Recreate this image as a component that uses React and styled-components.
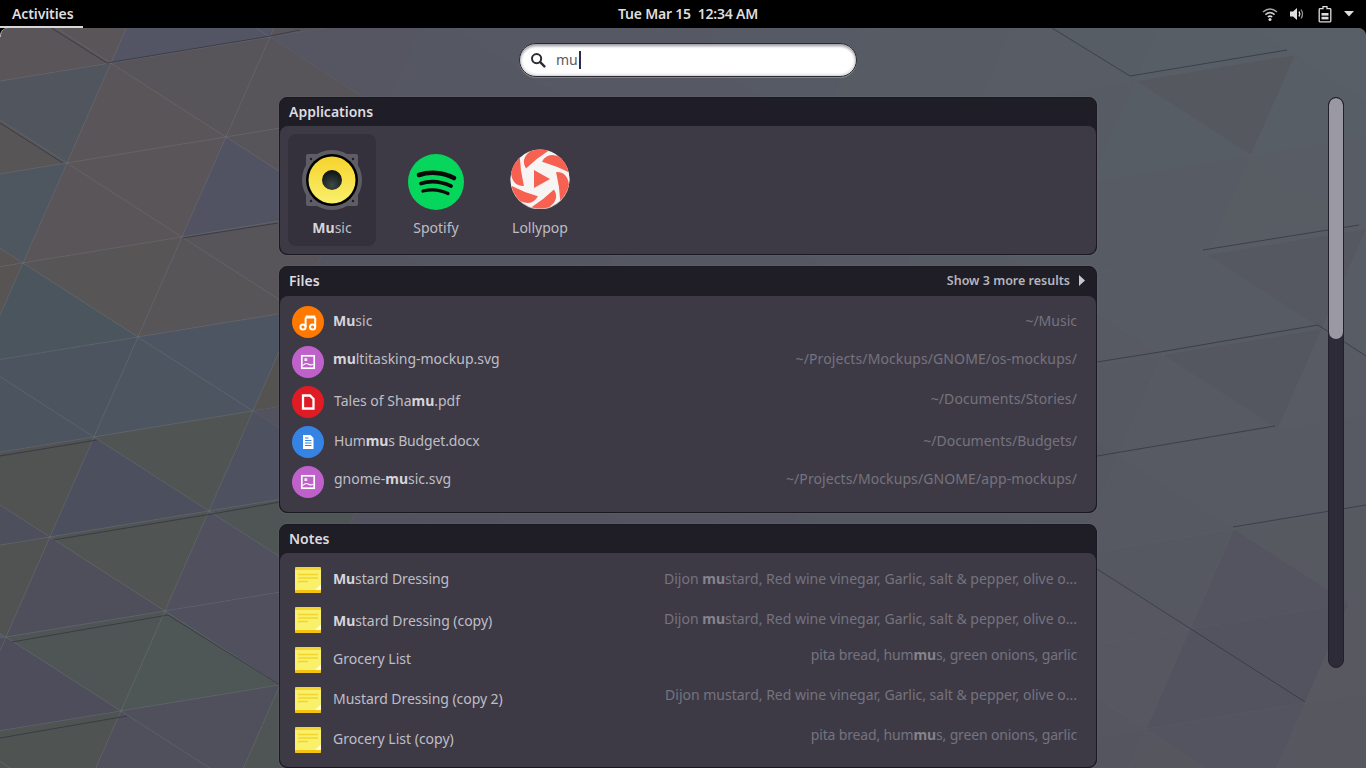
import React from 'react';
import styled, { createGlobalStyle } from 'styled-components';

const GlobalStyle = createGlobalStyle`
  html, body {
    margin: 0;
    height: 100%;
    background: #000;
    overflow: hidden;
  }
  body {
    font-family: "Noto Sans", "Open Sans", sans-serif;
  }
`;

const Screen = styled.div`
  width: 1366px;
  height: 768px;
  display: flex;
  flex-direction: column;
  overflow: hidden;
`;

const TopBar = styled.header`
  height: 28px;
  flex: none;
  display: grid;
  grid-template-columns: 1fr 280px 1fr;
  background: #000;
  color: #dededf;
  font-size: 14px;
  font-weight: 600;
`;

const Activities = styled.div`
  width: 83px;
  height: 28px;
  box-sizing: border-box;
  border-bottom: 2px solid #d6d6d6;
  padding: 0 0 0 12px;
  line-height: 27px;
  letter-spacing: -0.1px;
`;

const Clock = styled.div`
  text-align: center;
  line-height: 28px;
  margin-left: 10px;
  white-space: pre;
  letter-spacing: -0.2px;
`;

const Tray = styled.div`
  display: flex;
  align-items: center;
  justify-content: flex-end;
  padding-right: 12px;
  color: #dededf;
`;

const TrayIcon = styled.svg`
  display: block;
  margin-left: ${(p) => p.$gap}px;
`;

const Overview = styled.main`
  flex: 1;
  display: grid;
  position: relative;
  border-radius: 8px 8px 0 0;
  overflow: hidden;
  &::before {
    content: '';
    position: absolute;
    top: -1px;
    left: 0;
    width: 10px;
    height: 10px;
    box-sizing: border-box;
    border-top: 1px solid #d6d6d6;
    border-left: 1px solid #b5b5b5;
    border-top-left-radius: 8px;
    z-index: 2;
  }
`;

const WallpaperSvg = styled.svg`
  grid-area: 1 / 1;
  display: block;
`;

const Content = styled.div`
  grid-area: 1 / 1;
  display: grid;
  grid-template-columns: 1328px 16px;
  height: 740px;
  overflow: hidden;
`;

const Main = styled.div`
  display: flex;
  flex-direction: column;
  align-items: center;
  padding-left: 48px;
  box-sizing: border-box;
`;

const SearchBox = styled.div`
  width: 338px;
  height: 34px;
  margin-top: 15px;
  box-sizing: border-box;
  display: flex;
  align-items: center;
  padding: 0 0 1px 10px;
  background: #fff;
  border: 1px solid #2a2831;
  border-radius: 17px;
  box-shadow: inset 0 3px 3px -1px #9d9da3, inset 0 0 3px 1px #c9c9cd, 0 1px 0 rgba(255, 255, 255, 0.25);
  color: #5b5965;
  font-size: 14px;
`;

const SearchIcon = styled.svg`
  display: block;
  flex: none;
  margin-right: 10px;
`;

const Caret = styled.span`
  display: inline-block;
  width: 2px;
  height: 18px;
  margin-left: 1px;
  background: #2b2c4d;
`;

const Results = styled.div`
  width: 818px;
  margin-top: 20px;
  display: flex;
  flex-direction: column;
  gap: 11px;
`;

const Panel = styled.section`
  box-sizing: border-box;
  height: ${(p) => p.$height}px;
  flex: none;
  background: #1f1d25;
  border: 1px solid #1a1820;
  border-radius: 8px;
  box-shadow: 0 0 0 1px rgba(255, 255, 255, 0.03);
  display: flex;
  flex-direction: column;
  overflow: hidden;
`;

const PanelHeader = styled.div`
  height: ${(p) => p.$height || 28}px;
  flex: none;
  box-sizing: border-box;
  display: flex;
  align-items: center;
  justify-content: space-between;
  padding: 0 11px ${(p) => (p.$height ? 3 : 2)}px 9px;
  color: #dcdbe0;
  font-size: 14px;
  font-weight: 600;
`;

const MoreLink = styled.div`
  display: flex;
  align-items: center;
  gap: 9px;
  color: #b6b5bc;
  font-size: 12.5px;
`;

const PanelBody = styled.div`
  flex: 1;
  background: #3d3a46;
  border-radius: 8px;
  box-sizing: border-box;
  padding: ${(p) => p.$padding};
`;

const AppGrid = styled(PanelBody)`
  display: flex;
  gap: 16px;
`;

const AppTile = styled.div`
  width: 88px;
  height: 112px;
  border-radius: 8px;
  background: ${(p) => (p.$active ? '#34313c' : 'transparent')};
  display: flex;
  flex-direction: column;
  align-items: center;
  color: #bebdc4;
  font-size: 14px;
`;

const AppIcon = styled.div`
  height: 88px;
  display: flex;
  align-items: center;
  justify-content: center;
  padding-top: ${(p) => p.$drop}px;
  box-sizing: border-box;
`;

const AppLabel = styled.div`
  line-height: 20px;
  margin-top: -4px;
`;

const Row = styled.div`
  height: 40px;
  display: flex;
  align-items: center;
  padding: 0 19px 0 ${(p) => p.$left}px;
`;

const RowIcon = styled.svg`
  display: block;
  flex: none;
`;

const RowTitle = styled.div`
  margin-left: ${(p) => p.$gap}px;
  margin-bottom: ${(p) => p.$lift || 0}px;
  letter-spacing: ${(p) => p.$track || 0}px;
  color: #bfbec5;
  font-size: 14px;
  white-space: nowrap;
`;

const RowDetail = styled.div`
  margin-left: auto;
  margin-bottom: ${(p) => p.$lift || 0}px;
  letter-spacing: ${(p) => p.$track || 0}px;
  color: #75737e;
  font-size: 14px;
  white-space: nowrap;
`;

const Hit = styled.b`
  font-weight: 700;
  color: #d6d5da;
`;

const DetailHit = styled.b`
  font-weight: 700;
  color: #85838d;
`;

const Scrollbar = styled.div`
  width: 16px;
  height: 571px;
  margin-top: 69px;
  box-sizing: border-box;
  background: #2e2b38;
  border: 1px solid #22202a;
  border-radius: 8px;
  overflow: hidden;
`;

const ScrollThumb = styled.div`
  height: 241px;
  background: #9a98a3;
  border-radius: 7px;
`;

// wallpaper: one triangle lattice. Left of the panels each triangle has its own colour,
// the right side is a soft ramp with a few darker triangles on it
const U = [44, -100];
const V = [115, 74];
const ORIGIN = [138, 337];

const LEFT_TRIANGLES = [
  [20, 47, '#5b5658'], [179, 21, '#555566'], [202, 79, '#5a5659'], [43, 105, '#50555f'],
  [135, 121, '#5c5557'], [294, 95, '#5a5659'], [-24, 147, '#5a5556'], [158, 179, '#5b5557'],
  [-1, 205, '#4d5761'], [91, 221, '#5b5557'], [250, 195, '#515263'], [317, 153, '#5a5659'],
  [-45, 305, '#5a5452'], [114, 279, '#5a5556'], [206, 295, '#5a5657'], [273, 253, '#585658'],
  [47, 321, '#48565f'], [229, 353, '#4d5663'], [70, 379, '#4b5560'], [162, 395, '#4b5661'],
  [321, 369, '#55534f'], [3, 421, '#4b5660'], [185, 453, '#50544f'], [26, 479, '#505350'],
  [118, 495, '#4b4f5e'], [277, 469, '#4d5060'], [-41, 521, '#4c4e5c'], [141, 553, '#4f5450'],
  [300, 527, '#4e5652'], [-18, 579, '#50534f'], [74, 595, '#4e4e5c'], [233, 569, '#4f4f5e'],
  [97, 653, '#4e5652'], [256, 627, '#4f4f5f'], [30, 695, '#4d4c5b'], [189, 669, '#4d5853'],
  [53, 753, '#4e5451'], [212, 727, '#4f4e5c'], [145, 769, '#4f4e5c'], [304, 743, '#4e5652'],
];

const RIGHT_TRIANGLES = [
  [1221, 91, '#55595f'], [1293, 267, '#555860'], [1251, 368, '#545760'], [1257, 585, '#535460'],
  [1281, 643, '#53535f'], [1214, 685, '#535360'], [1239, 743, '#545460'],
];

const DARK_LINES = [
  '50,27 107,63 265,37 300,30',
  '0,123 63,163',
  '182,238 278,223',
  '0,456 97,440',
  '53,540 212,514 280,502',
  '12,642 168,615 280,685',
  '0,738 127,716',
  '1052,28 1130,76 1287,50',
  '1203,250 1359,225',
  '1097,362 1160,352 1318,325 1366,356',
  '1097,456 1275,426',
  '1233,527 1366,505',
  '1097,569 1305,702',
];

const mix = (a, b, t) => a.map((v, n) => v + (b[n] - v) * t);

const toRgb = ([r, g, b]) => `rgb(${Math.round(r)},${Math.round(g)},${Math.round(b)})`;

const fromHex = (hex) => [1, 3, 5].map((n) => parseInt(hex.slice(n, n + 2), 16));

const softRamp = (x, y) => {
  const tx = Math.min(1, Math.max(0, (x - 300) / 1000));
  const ty = Math.min(1, Math.max(0, (y - 28) / 740));
  const top = mix([85, 86, 98], [88, 95, 102], tx);
  const bottom = mix([80, 80, 94], [87, 87, 95], tx);
  return toRgb(mix(top, bottom, ty));
};

const triangleColor = (x, y) => {
  if (x < 340) {
    let best = LEFT_TRIANGLES[0];
    let bestDist = Infinity;
    for (const s of LEFT_TRIANGLES) {
      const d = (s[0] - x) ** 2 + (s[1] - y) ** 2;
      if (d < bestDist) {
        bestDist = d;
        best = s;
      }
    }
    // pull a little towards neutral, the picture is hazier than the raw samples
    return toRgb(mix(fromHex(best[2]), [82, 83, 92], 0.2));
  }
  for (const s of RIGHT_TRIANGLES) {
    if ((s[0] - x) ** 2 + (s[1] - y) ** 2 < 900) return s[2];
  }
  return softRamp(x, y);
};

const point = (i, j) => [ORIGIN[0] + i * U[0] + j * V[0], ORIGIN[1] + i * U[1] + j * V[1]];

const buildTriangles = () => {
  const list = [];
  for (let i = -12; i < 16; i++) {
    for (let j = -6; j < 18; j++) {
      const a = point(i, j);
      const b = point(i + 1, j + 1);
      for (const c of [point(i + 1, j), point(i, j + 1)]) {
        const cx = (a[0] + b[0] + c[0]) / 3;
        const cy = (a[1] + b[1] + c[1]) / 3;
        if (cx < -80 || cx > 1450 || cy < -40 || cy > 830) continue;
        list.push({
          points: [a, b, c].map((p) => p.join(',')).join(' '),
          fill: triangleColor(cx, cy),
          line: cx < 340 ? 'rgba(255,255,255,0.06)' : 'rgba(255,255,255,0.015)',
        });
      }
    }
  }
  return list;
};

const triangles = buildTriangles();

const Wallpaper = () => (
  <WallpaperSvg width="1366" height="740" viewBox="0 28 1366 740">
    <rect x="0" y="28" width="1366" height="740" fill="#565a63" />
    {triangles.map((t, n) => (
      <polygon key={n} points={t.points} fill={t.fill} stroke={t.line} strokeWidth="1" />
    ))}
    {DARK_LINES.map((l) => (
      <polyline key={l} points={l} fill="none" stroke="#2c2b3a" strokeOpacity="0.6" strokeWidth="1" />
    ))}
  </WallpaperSvg>
);

const SpeakerIcon = () => (
  <svg width="60" height="60" viewBox="0 0 60 60">
    <defs>
      <linearGradient id="cone" x1="0" y1="0" x2="0" y2="1">
        <stop offset="0" stopColor="#f6d32d" />
        <stop offset="1" stopColor="#f9f06b" />
      </linearGradient>
      <radialGradient id="cap" cx="0.5" cy="0.75" r="0.7">
        <stop offset="0" stopColor="#3d4a48" />
        <stop offset="1" stopColor="#111413" />
      </radialGradient>
    </defs>
    <rect x="4" y="4" width="52" height="52" rx="2" fill="#5e5c64" />
    <circle cx="30" cy="30" r="30" fill="#5e5c64" />
    <circle cx="9" cy="9" r="1.2" fill="#241f31" />
    <circle cx="51" cy="9" r="1.2" fill="#241f31" />
    <circle cx="9" cy="51" r="1.2" fill="#241f31" />
    <circle cx="51" cy="51" r="1.2" fill="#241f31" />
    <circle cx="30" cy="30" r="26" fill="#000" />
    <circle cx="30" cy="30" r="23.5" fill="url(#cone)" />
    <circle cx="30" cy="30" r="10" fill="url(#cap)" />
  </svg>
);

const SpotifyIcon = () => (
  <svg width="56" height="56" viewBox="0 0 56 56">
    <circle cx="28" cy="28" r="28" fill="#07d65c" />
    <g fill="none" stroke="#0a0a0a" strokeLinecap="round">
      <path d="M11 21 C21 17.5 35 18 46 24" strokeWidth="4.6" />
      <path d="M13 29.5 C22 26.5 33 27.5 43 32" strokeWidth="3.8" />
      <path d="M15 37 C23 35 32 35.5 40 39.5" strokeWidth="3.2" />
    </g>
  </svg>
);

const LollypopIcon = () => (
  <svg width="60" height="60" viewBox="-30 -30 60 60">
    <circle cx="0" cy="1" r="29.5" fill="#c9c5c0" />
    <circle cx="0" cy="0" r="29.5" fill="#f6f5f4" />
    {[0, 60, 120, 180, 240, 300].map((a) => (
      <path
        key={a}
        transform={`rotate(${a})`}
        d="M-9.5 -28 A29.5 29.5 0 0 1 8.5 -28.2 Q-3 -21 -14 -10.5 Q-20 -20 -9.5 -28 Z"
        fill="#f66151"
      />
    ))}
    <path d="M-6 -9 L-6 9 L10 0 Z" fill="#f66151" />
  </svg>
);

const MusicFileIcon = () => (
  <RowIcon width="32" height="32" viewBox="0 0 32 32">
    <circle cx="16" cy="16" r="16" fill="#ff7800" />
    <g fill="none" stroke="#fff" strokeWidth="2">
      <circle cx="11" cy="21" r="2.6" />
      <circle cx="20.6" cy="21" r="2.6" />
      <path d="M13.6 21 V11.5 M23.2 21 V11.5" />
      <path d="M13.6 11 H23.2" strokeWidth="3" />
    </g>
  </RowIcon>
);

const ImageFileIcon = () => (
  <RowIcon width="32" height="32" viewBox="0 0 32 32">
    <circle cx="16" cy="16" r="16" fill="#c061cb" />
    <rect x="9.8" y="9.8" width="12.4" height="12.4" fill="none" stroke="#fff" strokeWidth="1.7" />
    <rect x="12.4" y="12.2" width="2.8" height="2.8" fill="#fff" opacity="0.85" />
    <path d="M11 19.5 Q13.5 16.5 16 18 T21 18.5" fill="none" stroke="#fff" strokeWidth="1.1" />
  </RowIcon>
);

const PdfFileIcon = () => (
  <RowIcon width="32" height="32" viewBox="0 0 32 32">
    <circle cx="16" cy="16" r="16" fill="#e01b24" />
    <path d="M11 9.5 H18 L21.5 13 V22.5 H11 Z" fill="none" stroke="#fff" strokeWidth="2.3" />
  </RowIcon>
);

const DocFileIcon = () => (
  <RowIcon width="32" height="32" viewBox="0 0 32 32">
    <circle cx="16" cy="16" r="16" fill="#3584e4" />
    <path d="M11 9 H18.5 L21.5 12 V23 H11 Z" fill="#fff" />
    <path d="M13 14.5 H19.5 M13 17 H19.5 M13 19.5 H19.5" stroke="#3584e4" strokeWidth="1.1" />
    <path d="M13 12 H16.5" stroke="#3584e4" strokeWidth="1.1" />
  </RowIcon>
);

const NoteIcon = () => (
  <RowIcon width="26" height="26" viewBox="0 0 26 26">
    <rect width="26" height="26" rx="1.5" fill="#f9f06b" />
    <path d="M0 1.5 A1.5 1.5 0 0 1 1.5 0 H24.5 A1.5 1.5 0 0 1 26 1.5 V3 H0 Z" fill="#f6d32d" />
    <path d="M0 23 H26 V24.5 A1.5 1.5 0 0 1 24.5 26 H1.5 A1.5 1.5 0 0 1 0 24.5 Z" fill="#f5c211" />
    <path d="M3 7.5 H23 M3 11 H23 M3 14.5 H13" stroke="#f6d32d" strokeWidth="1.6" />
    <path d="M20 23 L26 17.5 V23 Z" fill="#fcfbe6" />
  </RowIcon>
);

const Emph = (text) => {
  // markup in the data: *bold part*
  const parts = text.split('*');
  return parts.map((part, n) => (n % 2 ? <Hit key={n}>{part}</Hit> : part));
};

const EmphDetail = (text) => {
  const parts = text.split('*');
  return parts.map((part, n) => (n % 2 ? <DetailHit key={n}>{part}</DetailHit> : part));
};

const files = [
  { icon: <MusicFileIcon />, title: '*Mu*sic', detail: '~/Music', gap: 9, lift: 4, detailLift: 4 },
  { icon: <ImageFileIcon />, title: '*mu*ltitasking-mockup.svg', detail: '~/Projects/Mockups/GNOME/os-mockups/', gap: 9, lift: 8, detailLift: 8, detailTrack: 0.11 },
  { icon: <PdfFileIcon />, title: 'Tales of Sha*mu*.pdf', detail: '~/Documents/Stories/', gap: 10, lift: 4, detailLift: 8, detailTrack: 0.1 },
  { icon: <DocFileIcon />, title: 'Hum*mu*s Budget.docx', detail: '~/Documents/Budgets/', gap: 10, lift: 4, detailLift: 4, track: -0.15 },
  { icon: <ImageFileIcon />, title: 'gnome-*mu*sic.svg', detail: '~/Projects/Mockups/GNOME/app-mockups/', gap: 10, lift: 8, detailLift: 8, detailTrack: 0.1 },
];

const notes = [
  { title: '*Mu*stard Dressing', detail: 'Dijon *mu*stard, Red wine vinegar, Garlic, salt & pepper, olive o...', lift: 4, detailLift: 4, track: -0.1 },
  { title: '*Mu*stard Dressing (copy)', detail: 'Dijon *mu*stard, Red wine vinegar, Garlic, salt & pepper, olive o...', lift: 0, detailLift: 4, track: -0.05 },
  { title: 'Grocery List', detail: 'pita bread, hum*mu*s, green onions, garlic', lift: 4, detailLift: 12, detailTrack: -0.15 },
  { title: 'Mustard Dressing (copy 2)', detail: 'Dijon mustard, Red wine vinegar, Garlic, salt & pepper, olive o...', lift: 4, detailLift: 12, track: -0.05 },
  { title: 'Grocery List (copy)', detail: 'pita bread, hum*mu*s, green onions, garlic', lift: 4, detailLift: 12, detailTrack: -0.15 },
];

const App = () => (
  <Screen>
    <GlobalStyle />
    <TopBar>
      <Activities>Activities</Activities>
      <Clock>Tue Mar 15  12:34 AM</Clock>
      <Tray>
        <TrayIcon width="16" height="16" viewBox="0 0 16 16" fill="none" stroke="currentColor">
          <path d="M1 6 Q8 0 15 6" strokeWidth="1.6" opacity="0.75" />
          <path d="M3.4 8.6 Q8 4.6 12.6 8.6" strokeWidth="1.6" opacity="0.9" />
          <path d="M5.8 11 Q8 9.2 10.2 11" strokeWidth="1.6" />
          <circle cx="8" cy="13.6" r="1.5" fill="currentColor" stroke="none" />
        </TrayIcon>
        <TrayIcon $gap={11} width="16" height="16" viewBox="0 0 16 16" fill="none" stroke="currentColor">
          <path d="M1 5.5 H4 L8 2 V14 L4 10.5 H1 Z" fill="currentColor" stroke="none" />
          <path d="M10 5.5 Q11.6 8 10 10.5" strokeWidth="1.4" />
          <path d="M12 3.5 Q15 8 12 12.5" strokeWidth="1.3" opacity="0.65" />
        </TrayIcon>
        <TrayIcon $gap={13} width="14" height="18" viewBox="0 0 14 18" fill="none" stroke="currentColor">
          <path d="M2 3.7 H5 V1.7 H9 V3.7 H12 Q12.8 3.7 12.8 4.5 V16 Q12.8 16.8 12 16.8 H2 Q1.2 16.8 1.2 16 V4.5 Q1.2 3.7 2 3.7 Z" strokeWidth="1.3" />
          <rect x="3.5" y="8" width="7" height="2.6" fill="currentColor" stroke="none" />
          <rect x="3.5" y="11.8" width="7" height="2.6" fill="currentColor" stroke="none" />
        </TrayIcon>
        <TrayIcon $gap={12} width="10" height="6" viewBox="0 0 10 6">
          <path d="M0 0 H10 L5 5.5 Z" fill="currentColor" />
        </TrayIcon>
      </Tray>
    </TopBar>
    <Overview>
      <Wallpaper />
      <Content>
        <Main>
          <SearchBox>
            <SearchIcon width="16" height="16" viewBox="0 0 16 16" fill="none" stroke="#2e2c36">
              <circle cx="6.6" cy="6.6" r="4.6" strokeWidth="2" />
              <path d="M10.2 10.2 L14.4 14.4" strokeWidth="2.4" strokeLinecap="round" />
            </SearchIcon>
            mu<Caret />
          </SearchBox>
          <Results>
            <Panel $height={158}>
              <PanelHeader>Applications</PanelHeader>
              <AppGrid $padding="8px">
                <AppTile $active>
                  <AppIcon $drop={4}><SpeakerIcon /></AppIcon>
                  <AppLabel><Hit>Mu</Hit>sic</AppLabel>
                </AppTile>
                <AppTile>
                  <AppIcon $drop={8}><SpotifyIcon /></AppIcon>
                  <AppLabel>Spotify</AppLabel>
                </AppTile>
                <AppTile>
                  <AppIcon $drop={2}><LollypopIcon /></AppIcon>
                  <AppLabel>Lollypop</AppLabel>
                </AppTile>
              </AppGrid>
            </Panel>
            <Panel $height={247}>
              <PanelHeader $height={29}>
                Files
                <MoreLink>
                  Show 3 more results
                  <svg width="6" height="11" viewBox="0 0 6 11"><path d="M0 0 L6 5.5 L0 11 Z" fill="#c8c7cd" /></svg>
                </MoreLink>
              </PanelHeader>
              <PanelBody $padding="6px 0 0">
                {files.map((f) => (
                  <Row key={f.title} $left={12}>
                    {f.icon}
                    <RowTitle $gap={f.gap} $lift={f.lift} $track={f.track}>{Emph(f.title)}</RowTitle>
                    <RowDetail $lift={f.detailLift} $track={f.detailTrack}>{EmphDetail(f.detail)}</RowDetail>
                  </Row>
                ))}
              </PanelBody>
            </Panel>
            <Panel $height={244}>
              <PanelHeader>Notes</PanelHeader>
              <PanelBody $padding="7px 0 0">
                {notes.map((n) => (
                  <Row key={n.title} $left={15}>
                    <NoteIcon />
                    <RowTitle $gap={12} $lift={n.lift} $track={n.track}>{Emph(n.title)}</RowTitle>
                    <RowDetail $lift={n.detailLift} $track={n.detailTrack}>{EmphDetail(n.detail)}</RowDetail>
                  </Row>
                ))}
              </PanelBody>
            </Panel>
          </Results>
        </Main>
        <Scrollbar>
          <ScrollThumb />
        </Scrollbar>
      </Content>
    </Overview>
  </Screen>
);

export default App;
